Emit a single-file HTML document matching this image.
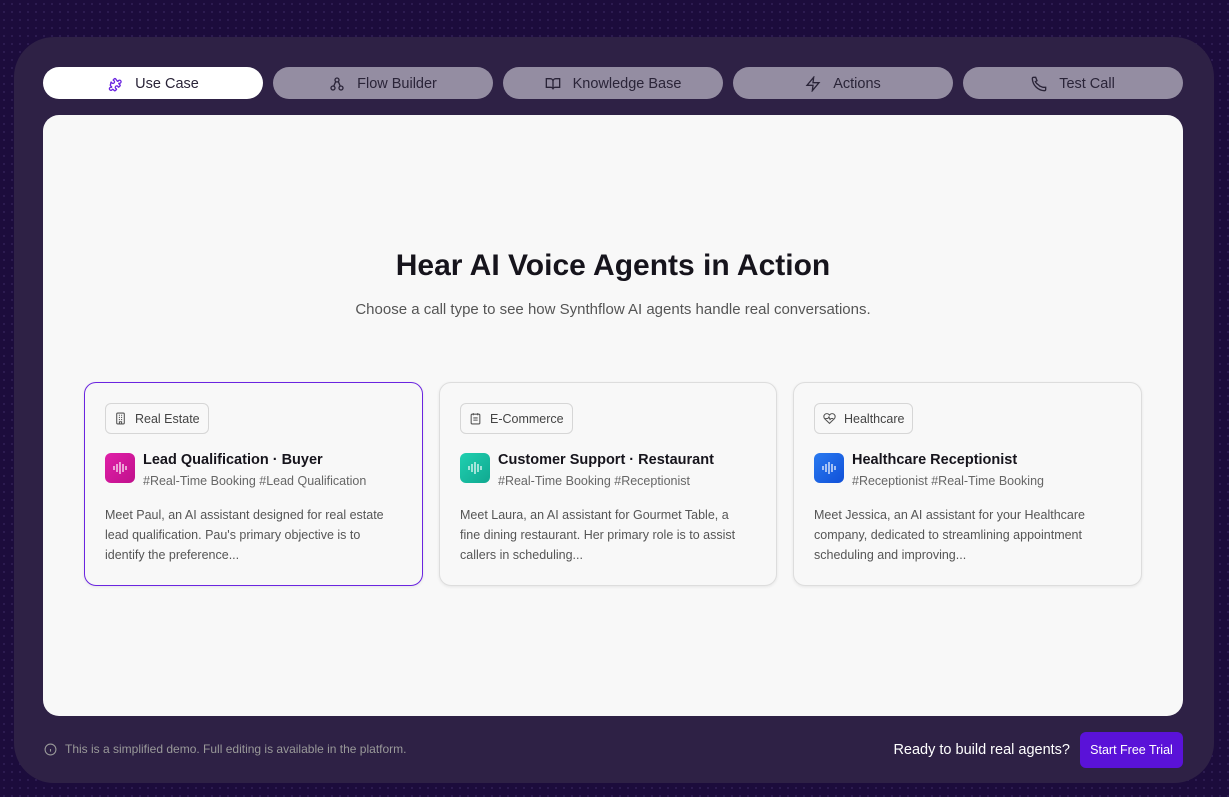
<!DOCTYPE html>
<html><head><meta charset="utf-8"><style>
*{box-sizing:border-box;margin:0;padding:0}
body{width:1229px;height:797px;overflow:hidden;background:#1c0c3c;background-image:radial-gradient(#2d1c52 1px,transparent 1.2px);background-size:8px 8px;font-family:"Liberation Sans",sans-serif;position:relative}
.panel{position:absolute;left:14px;top:37px;width:1200px;height:746px;background:#2e2145;border-radius:40px}
.tab{position:absolute;top:30px;width:220px;height:32px;border-radius:16px;background:#948da2;color:#2a2438;font-size:14.5px;display:flex;align-items:center;justify-content:center;gap:12px;padding-top:2px}
.tab.on{background:#fff;color:#2a2438}
.tab svg{width:16px;height:16px}
.main{position:absolute;left:29px;top:78px;width:1140px;height:601px;background:#f8f8f8;border-radius:16px}
h1{position:absolute;top:134px;width:100%;text-align:center;font-size:30px;font-weight:bold;color:#16141c}
.sub{position:absolute;top:186px;width:100%;text-align:center;font-size:15px;color:#555}
.card{position:absolute;top:267px;height:204px;background:#f8f8f8;border:1px solid #ddd;border-radius:12px;box-shadow:0 1px 3px rgba(0,0,0,.08)}
.card.sel{border-color:#6b25e0}
.pill{position:absolute;left:20px;top:20px;height:31px;border:1px solid #d6d6d6;border-radius:6px;display:flex;align-items:center;padding:0 8px;gap:8px;font-size:12.5px;color:#444}
.av{position:absolute;left:20px;top:70px;width:30px;height:30px;border-radius:6px;display:flex;align-items:center;justify-content:center}
.t{position:absolute;left:58px;top:69px;font-size:14.5px;font-weight:bold;color:#16141c}
.tg{position:absolute;left:58px;top:91px;font-size:12.5px;color:#666}
.d{position:absolute;left:20px;top:122px;right:28px;font-size:12.5px;line-height:20px;color:#555}
.foot{position:absolute;left:30px;top:705px;font-size:12px;color:#999;display:flex;align-items:center;gap:8px}
.ready{position:absolute;right:144px;top:705px;color:#fff;font-size:14.5px}
.btn{position:absolute;left:1066px;top:695px;width:103px;height:36px;background:#5a12d8;border-radius:6px;color:#fff;font-size:12.5px;display:flex;align-items:center;justify-content:center}
</style></head><body>
<div class="panel">
<div class="tab on" style="left:29px"><svg viewBox="0 0 24 24" fill="none" stroke="#6b25e0" stroke-width="2" stroke-linejoin="round"><path d="M15.4 7.6c.3.3.8.4 1.2.3a2.3 2.3 0 1 1 1.5 2.9c-.4.1-.6.5-.3.9l1.6 1.6c.5.5.5 1.2 0 1.7l-1.6 1.6c-.3.3-.7.2-.9-.2a2.3 2.3 0 1 0-2.9 2.9c.4.2.5.6.2.9l-1.6 1.6c-.5.5-1.2.5-1.7 0l-1.6-1.6c-.3-.3-.8-.4-1.2-.3a2.3 2.3 0 1 1-1.5-2.9c.4-.1.6-.5.3-.9l-1.6-1.6c-.5-.5-.5-1.2 0-1.7L5.9 9.3c.3-.3.7-.2.9.2a2.3 2.3 0 1 0 2.9-2.9c-.4-.2-.5-.6-.2-.9l1.6-1.6c.5-.5 1.2-.5 1.7 0z"/></svg>Use Case</div>
<div class="tab" style="left:259px"><svg viewBox="0 0 24 24" fill="none" stroke="#2a2438" stroke-width="2"><circle cx="12" cy="6" r="3"/><circle cx="6" cy="18" r="3"/><circle cx="18" cy="18" r="3"/><path d="M10 8.5l-3 7M14 8.5l3 7"/></svg>Flow Builder</div>
<div class="tab" style="left:489px"><svg viewBox="0 0 24 24" fill="none" stroke="#2a2438" stroke-width="2"><path d="M2 4h6a4 4 0 014 4v12a3 3 0 00-3-3H2zM22 4h-6a4 4 0 00-4 4v12a3 3 0 013-3h7z"/></svg>Knowledge Base</div>
<div class="tab" style="left:719px"><svg viewBox="0 0 24 24" fill="none" stroke="#2a2438" stroke-width="2"><path d="M13 2L3 14h9l-1 8 10-12h-9z"/></svg>Actions</div>
<div class="tab" style="left:949px"><svg viewBox="0 0 24 24" fill="none" stroke="#2a2438" stroke-width="2"><path d="M22 17v3a2 2 0 01-2 2A19 19 0 012 4a2 2 0 012-2h3l2 5-2.5 1.5a11 11 0 005 5L13 15l5 2z"/></svg>Test Call</div>
<div class="main">
<h1>Hear AI Voice Agents in Action</h1>
<div class="sub">Choose a call type to see how Synthflow AI agents handle real conversations.</div>
<div class="card sel" style="left:41px;width:339px"><div class="pill"><svg width="13" height="13" viewBox="0 0 24 24" fill="none" stroke="#555" stroke-width="2"><rect x="5" y="2" width="14" height="20" rx="2"/><path d="M9 6h2M13 6h2M9 10h2M13 10h2M9 14h2M13 14h2M10 22v-4h4v4"/></svg>Real Estate</div>
<div class="av" style="background:linear-gradient(135deg,#e020a8,#c0108c)"><svg width="16" height="14" viewBox="0 0 16 14" stroke="#fff" stroke-width="1.2"><path d="M2 5v4M5 3v8M8 1v12M11 3v8M14 5v4"/></svg></div>
<div class="t">Lead Qualification · Buyer</div><div class="tg">#Real-Time Booking #Lead Qualification</div>
<div class="d">Meet Paul, an AI assistant designed for real estate lead qualification. Pau's primary objective is to identify the preference...</div></div>
<div class="card" style="left:396px;width:338px"><div class="pill"><svg width="13" height="13" viewBox="0 0 24 24" fill="none" stroke="#555" stroke-width="2"><rect x="4" y="4" width="16" height="18" rx="2"/><path d="M8 2v4M16 2v4M8 11h8M8 15h8"/></svg>E-Commerce</div>
<div class="av" style="background:linear-gradient(135deg,#20d0b0,#10a890)"><svg width="16" height="14" viewBox="0 0 16 14" stroke="#fff" stroke-width="1.2"><path d="M2 5v4M5 3v8M8 1v12M11 3v8M14 5v4"/></svg></div>
<div class="t">Customer Support · Restaurant</div><div class="tg">#Real-Time Booking #Receptionist</div>
<div class="d" style="right:26px">Meet Laura, an AI assistant for Gourmet Table, a fine dining restaurant. Her primary role is to assist callers in scheduling...</div></div>
<div class="card" style="left:750px;width:349px"><div class="pill"><svg width="13" height="13" viewBox="0 0 24 24" fill="none" stroke="#555" stroke-width="2"><path d="M20.8 4.6a5.5 5.5 0 00-7.8 0L12 5.7l-1-1.1a5.5 5.5 0 00-7.8 7.8L12 21l8.8-8.6a5.5 5.5 0 000-7.8z"/><path d="M4 12h5l2-3 2 5 2-2h4"/></svg>Healthcare</div>
<div class="av" style="background:linear-gradient(135deg,#2a7af0,#1050d8)"><svg width="16" height="14" viewBox="0 0 16 14" stroke="#fff" stroke-width="1.2"><path d="M2 5v4M5 3v8M8 1v12M11 3v8M14 5v4"/></svg></div>
<div class="t">Healthcare Receptionist</div><div class="tg">#Receptionist #Real-Time Booking</div>
<div class="d">Meet Jessica, an AI assistant for your Healthcare company, dedicated to streamlining appointment scheduling and improving...</div></div>
</div>
<div class="foot"><svg width="13" height="13" viewBox="0 0 24 24" fill="none" stroke="#999" stroke-width="2"><circle cx="12" cy="12" r="10"/><path d="M12 16v-5M12 8v.01"/></svg>This is a simplified demo. Full editing is available in the platform.</div>
<div class="ready">Ready to build real agents?</div>
<div class="btn">Start Free Trial</div>
</div>
</body></html>
